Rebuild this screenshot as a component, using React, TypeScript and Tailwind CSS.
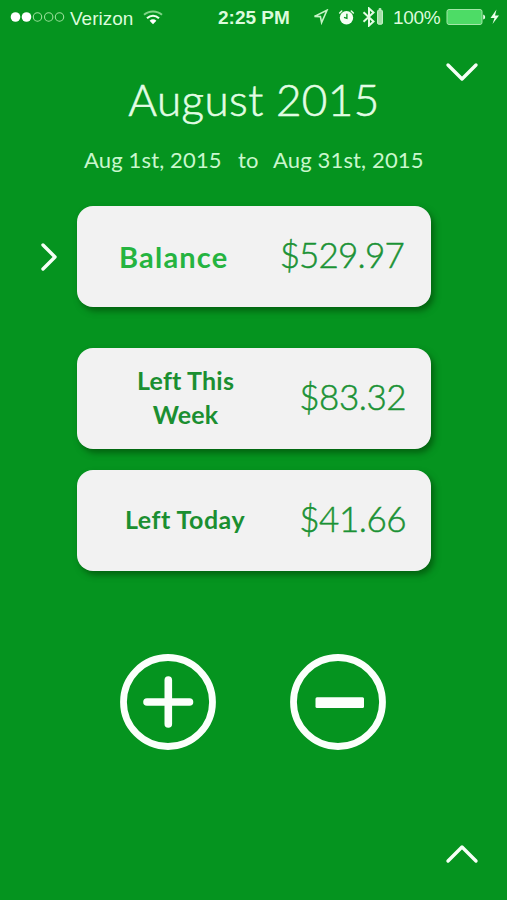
import React from 'react';

interface ChevronProps {
  points: string;
  width: number;
  height: number;
  className?: string;
}

const Chevron: React.FC<ChevronProps> = ({ points, width, height, className }) => (
  <svg
    width={width}
    height={height}
    viewBox={`0 0 ${width} ${height}`}
    fill="none"
    stroke="#f6fff6"
    strokeWidth="3.4"
    strokeLinecap="round"
    strokeLinejoin="round"
    className={className}
  >
    <polyline points={points} />
  </svg>
);

const StatusBar: React.FC = () => (
  <div className="flex h-[34px] items-center font-['Liberation_Sans',sans-serif] text-[19px] leading-none whitespace-nowrap text-[#dcfbdc]">
    {/* Carrier */}
    <div className="flex w-[218px] items-center pl-[10px]">
      <svg width="55" height="12" viewBox="0 0 55 12" fill="none" stroke="#9be09b" strokeWidth="1.1">
        <circle cx="5.5" cy="6" r="4.8" fill="#fff" stroke="none" />
        <circle cx="16.5" cy="6" r="4.8" fill="#fff" stroke="none" />
        <circle cx="27.5" cy="6" r="4.2" />
        <circle cx="38.7" cy="6" r="4.2" />
        <circle cx="49.5" cy="6" r="4.2" />
      </svg>
      <span className="ml-[5px] w-[64px] pt-[2px] text-[19px]">Verizon</span>
      <svg width="20" height="15" viewBox="0 0 20 15" fill="none" className="ml-[9px]">
        <path d="M1 4.8C6 .3 14 .3 19 4.8" stroke="#7fd487" strokeWidth="1.9" />
        <path d="M4 8.2c3.6-3.2 8.4-3.2 12 0" stroke="#f0fff0" strokeWidth="2.2" />
        <path d="M6.6 10.7c2-1.8 4.8-1.8 6.8 0L10 14.2z" fill="#fff" />
      </svg>
    </div>

    {/* Clock */}
    <span className="w-[94px] text-[19px] font-bold">2:25 PM</span>

    {/* Indicators */}
    <svg width="17" height="16" viewBox="0 0 17 16" fill="none" stroke="#c5f3c5" strokeWidth="1.6">
      <path d="M2.5 7.4L15 1.2 9.6 13.6 8.4 7.6z" />
    </svg>
    <svg width="17" height="17" viewBox="0 0 17 17" className="ml-[9px]">
      <circle cx="8.5" cy="8.7" r="6.7" fill="#f4fff4" />
      <path d="M1.7 4l2-2M15.300 4l-2-2" stroke="#dffbdf" strokeWidth="1.6" strokeLinecap="round" />
      <path d="M8.9 4.800v4.500L6 8.300" fill="none" stroke="#05941f" strokeWidth="1.3" />
    </svg>
    <svg width="22" height="20" viewBox="0 0 22 20" fill="none" className="ml-[7px]">
      <path d="M1.500 5.200l10 9.400L7 18.600V1.400l4.500 4-10 9.400" stroke="#e3fce3" strokeWidth="2" />
      <rect x="15.600" y="3.200" width="4.800" height="14" rx="1" fill="#a3dfa6" stroke="#d2f5d2" strokeWidth="1" />
      <path d="M16.800 2h2.400" stroke="#d2f5d2" strokeWidth="1.600" />
    </svg>
    <span className="ml-[9px] w-[49px] text-[19px] tracking-[-0.3px]">100%</span>
    <svg width="54" height="18" viewBox="0 0 54 18" fill="none" className="ml-[4px]">
      <rect x="1" y="1.5" width="35" height="15" rx="2" fill="#4ddc66" stroke="#a3e8a8" strokeWidth="1" />
      <path d="M37.200 6.500q2 .5 2 2.500t-2 2.500z" fill="#eaffea" />
      <path d="M50.500 1.500L44.500 10h4l-2 6L53 7.500h-4z" fill="#eaffea" />
    </svg>
  </div>
);

interface AmountCardProps {
  label: React.ReactNode;
  amount: string;
  labelClass: string;
  amountClass: string;
}

const AmountCard: React.FC<AmountCardProps> = ({ label, amount, labelClass, amountClass }) => (
  <div className="flex h-[101px] w-[354px] items-center justify-between rounded-[16px] bg-[#f2f2f2] shadow-[3px_4px_6px_rgba(0,50,0,0.5)]">
    <div className={`text-center whitespace-nowrap ${labelClass}`}>{label}</div>
    <div className={`pb-[4px] text-[35px] font-light whitespace-nowrap text-[#1b9235] [-webkit-text-stroke:0.5px_#1b9235] ${amountClass}`}>
      {amount}
    </div>
  </div>
);

const App: React.FC = () => {
  return (
    <div className="flex h-[900px] w-[507px] flex-col overflow-hidden bg-[#05941f] font-[Lato,sans-serif]">
      <StatusBar />

      {/* Month */}
      <div className="grid h-[110px] grid-cols-[77px_354px_76px] pt-[28px]">
        <h1 className="col-start-2 pt-[11px] text-center text-[44px] leading-[52px] font-light tracking-[0.4px] whitespace-nowrap text-[#e2fde4] [-webkit-text-stroke:0.6px_#e2fde4]">
          August 2015
        </h1>
        <Chevron points="3,3 17,17 31,3" width={34} height={20} className="ml-[14px]" />
      </div>

      {/* Date range */}
      <div className="flex h-[62px] pt-[2px] pl-[84px] text-[22px] leading-[28px] tracking-[0.15px] whitespace-nowrap text-[#c9f7cd]">
        <span className="w-[154px]">Aug 1st, 2015</span>
        <span className="w-[35px]">to</span>
        <span>Aug 31st, 2015</span>
      </div>

      {/* Balances */}
      <div className="grid grid-cols-[77px_354px] items-center">
        <Chevron points="3,3 15,15 3,27" width={18} height={30} className="ml-[40px]" />
        <AmountCard
          label="Balance"
          amount="$529.97"
          labelClass="pl-[42px] text-[29px] font-bold tracking-[1.2px] text-[#25b440]"
          amountClass="pr-[27px] tracking-[-0.8px]"
        />
      </div>
      <div className="mt-[41px] ml-[77px] flex flex-col gap-[21px]">
        <AmountCard
          label={<>Left This<br />Week</>}
          amount="$83.32"
          labelClass="pl-[60px] pb-[3px] text-[25px] leading-[34px] font-bold tracking-[0.2px] text-[#1b8f31]"
          amountClass="pr-[25px] tracking-[-0.5px]"
        />
        <AmountCard
          label="Left Today"
          amount="$41.66"
          labelClass="pl-[48px] pb-px text-[25px] font-bold tracking-[0.5px] text-[#1b8f31]"
          amountClass="pr-[25px] tracking-[-0.5px]"
        />
      </div>

      {/* Add and subtract */}
      <div className="mt-[83px] ml-[120px] flex gap-[74px]">
        <button aria-label="Add">
          <svg width="96" height="96" viewBox="0 0 96 96" fill="none" stroke="#fbfffb">
            <circle cx="48" cy="48" r="44.5" strokeWidth="6.8" />
            <path d="M27 48h42.500M48.300 26v44" strokeWidth="7.6" strokeLinecap="round" />
          </svg>
        </button>
        <button aria-label="Subtract">
          <svg width="96" height="96" viewBox="0 0 96 96" fill="none">
            <circle cx="48" cy="48" r="44.5" stroke="#fbfffb" strokeWidth="6.8" />
            <rect x="25.5" y="43.3" width="48.5" height="10.6" rx="1.5" fill="#fbfffb" />
          </svg>
        </button>
      </div>

      <Chevron points="3,17 17,3 31,17" width={34} height={20} className="mt-auto mb-[36px] ml-[445px]" />
    </div>
  );
};

export default App;
